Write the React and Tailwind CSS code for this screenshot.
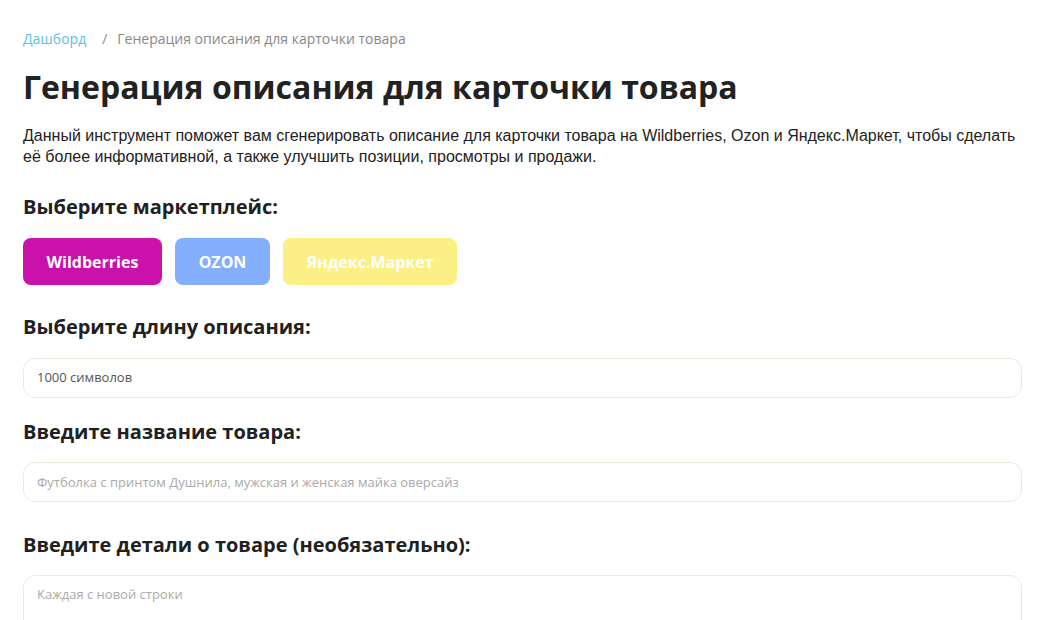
import React from 'react';

/**
 * Product card description generator form
 */
const App = () => {
  return (
    <div className="min-h-screen bg-white pl-[23px] pr-[15px] pt-[28px] font-['Open_Sans',sans-serif] text-[#212121]">
      {/* Breadcrumbs */}
      <nav className="flex items-center text-[14px] leading-[22px]">
        <a href="#" className="text-[#5bc2dc]">Дашборд</a>
        <span className="ml-[16px] mr-[10px] text-[#888]">/</span>
        <span className="text-[#888]">Генерация описания для карточки товара</span>
      </nav>

      <h1 className="mt-[15px] text-[32px] font-bold leading-[44px] text-[#222]">
        Генерация описания для карточки товара
      </h1>

      <p className="mt-[16px] font-['Liberation_Sans',Arial,sans-serif] text-[16px] leading-[21px] text-[#222]">
        Данный инструмент поможет вам сгенерировать описание для карточки товара на Wildberries, Ozon и Яндекс.Маркет, чтобы сделать
        её более информативной, а также улучшить позиции, просмотры и продажи.
      </p>

      {/* Marketplace */}
      <h2 className="mt-[26px] text-[20px] font-bold leading-[28px]">Выберите маркетплейс:</h2>
      <div className="mt-[17px] flex gap-[13px]">
        <button className="h-[47px] w-[139px] rounded-[8px] bg-[#cb11ab] text-[16px] font-bold text-white">
          Wildberries
        </button>
        <button className="h-[47px] w-[95px] rounded-[8px] bg-[#83affe] text-[16px] font-bold text-white">
          OZON
        </button>
        <button className="h-[47px] w-[174px] rounded-[8px] bg-[#fcef85] text-[16px] font-bold text-white">
          Яндекс.Маркет
        </button>
      </div>

      {/* Length */}
      <h2 className="mt-[28px] text-[20px] font-bold leading-[28px]">Выберите длину описания:</h2>
      <div className="mt-[17px] flex h-[40px] items-center rounded-[12px] border border-[#f1e8dd] px-[13px] text-[13px] text-[#555]">
        1000 символов
      </div>

      {/* Name */}
      <h2 className="mt-[20px] text-[20px] font-bold leading-[28px]">Введите название товара:</h2>
      <input
        className="mt-[16px] block h-[40px] w-full rounded-[12px] border border-[#f1e8dd] px-[13px] text-[13px] text-[#555] outline-none placeholder:text-[#aaa]"
        placeholder="Футболка с принтом Душнила, мужская и женская майка оверсайз"
      />

      {/* Details */}
      <h2 className="mt-[29px] text-[20px] font-bold leading-[28px]">
        Введите детали о товаре (необязательно):
      </h2>
      <textarea
        className="mt-[16px] block h-[120px] w-full resize-none rounded-[12px] border border-[#f1e8dd] px-[13px] py-[9px] text-[13px] text-[#555] outline-none placeholder:text-[#aaa]"
        placeholder="Каждая с новой строки"
      />
    </div>
  );
};

export default App;
